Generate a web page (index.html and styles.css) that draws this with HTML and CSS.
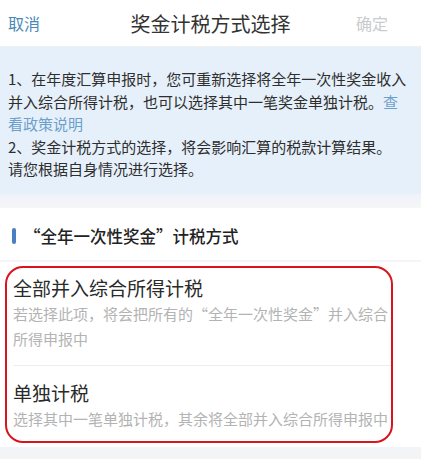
FILE: index.html
```html
<!DOCTYPE html>
<html lang="zh-CN">
<head>
<meta charset="utf-8">
<title>奖金计税方式选择</title>
<link rel="stylesheet" href="styles.css">
</head>
<body>
<div class="page">
  <header class="header">
    <span class="cancel">取消</span>
    <span class="title">奖金计税方式选择</span>
    <span class="confirm">确定</span>
  </header>
  <section class="info">
    <p>1、在年度汇算申报时，您可重新选择将全年一次性奖金收入并入综合所得计税，也可以选择其中一笔奖金单独计税。<span class="link">查看政策说明</span></p>
    <p><span class="line">2、奖金计税方式的选择，将会影响汇算的税款计算结果。</span><span class="line">请您根据自身情况进行选择。</span></p>
  </section>
  <div class="gap"></div>
  <section class="section">
    <div class="section-head">
      <span class="bar"></span>
      <span class="section-title">“全年一次性奖金”计税方式</span>
    </div>
    <div class="options-wrap">
      <div class="options">
        <div class="option first">
          <div class="opt-title">全部并入综合所得计税</div>
          <div class="opt-desc">若选择此项，将会把所有的“全年一次性奖金”并入综合所得申报中</div>
        </div>
        <div class="option second">
          <div class="opt-title">单独计税</div>
          <div class="opt-desc">选择其中一笔单独计税，其余将全部并入综合所得申报中</div>
        </div>
      </div>
    </div>
  </section>
</div>
</body>
</html>
```

FILE: styles.css
```css
* { box-sizing: border-box; }
html, body {
  margin: 0;
  padding: 0;
}
body {
  width: 421px;
  height: 459px;
  overflow: hidden;
  background: #f2f4f6;
  font-family: "Noto Sans CJK SC", "Noto Sans", sans-serif;
  color: #333;
}
.page {
  display: flex;
  flex-direction: column;
}
.header {
  height: 47px;
  background: #fff;
  display: grid;
  grid-template-columns: 1fr auto 1fr;
  align-items: center;
  padding: 0 8px;
  border-bottom: 1px solid #eef0f2;
}
.cancel {
  font-size: 16px;
  color: #4c88b6;
  justify-self: start;
}
.title {
  font-size: 20px;
  color: #333;
}
.confirm {
  justify-self: end;
  margin-right: 25px;
  font-size: 16px;
  color: #c9cbcd;
}
.info {
  background: #e6f0fa;
  padding: 21px 10px 13px 8px;
  font-size: 15px;
  line-height: 22.5px;
  color: #2e2e2e;
}
.info p {
  margin: 0;
}
.info .line {
  display: block;
}
.link {
  color: #6d9fcc;
}
.gap {
  height: 14px;
  background: linear-gradient(#eef3f8, #f5f6f8);
}
.section {
  background: #fff;
}
.section-head {
  display: flex;
  align-items: center;
  gap: 8px;
  padding: 16px 0 12px 12px;
  border-bottom: 2px solid #f4f5f6;
}
.bar {
  width: 4px;
  height: 16px;
  border-radius: 2px;
  background: #4a80c2;
}
.section-title {
  font-size: 16.5px;
  line-height: 24px;
  font-weight: 500;
  color: #222;
}
.options-wrap {
  background: #fff;
  padding: 4px 0 4px 5px;
  margin-right: 10px;
}
.options {
  width: 388px;
  border: 2.5px solid #d9141e;
  border-radius: 18px;
  padding: 0 0 0 6px;
}
.option {
  padding-right: 2px;
}
.option.first {
  padding-top: 7.5px;
  padding-bottom: 14px;
  border-bottom: 1px solid #ededed;
}
.option.second {
  padding-top: 14px;
  padding-bottom: 10px;
}
.opt-title {
  font-size: 19px;
  line-height: 26px;
  color: #2a2a2a;
}
.opt-desc {
  font-size: 15px;
  line-height: 25px;
  color: #b3b3b3;
}
```
